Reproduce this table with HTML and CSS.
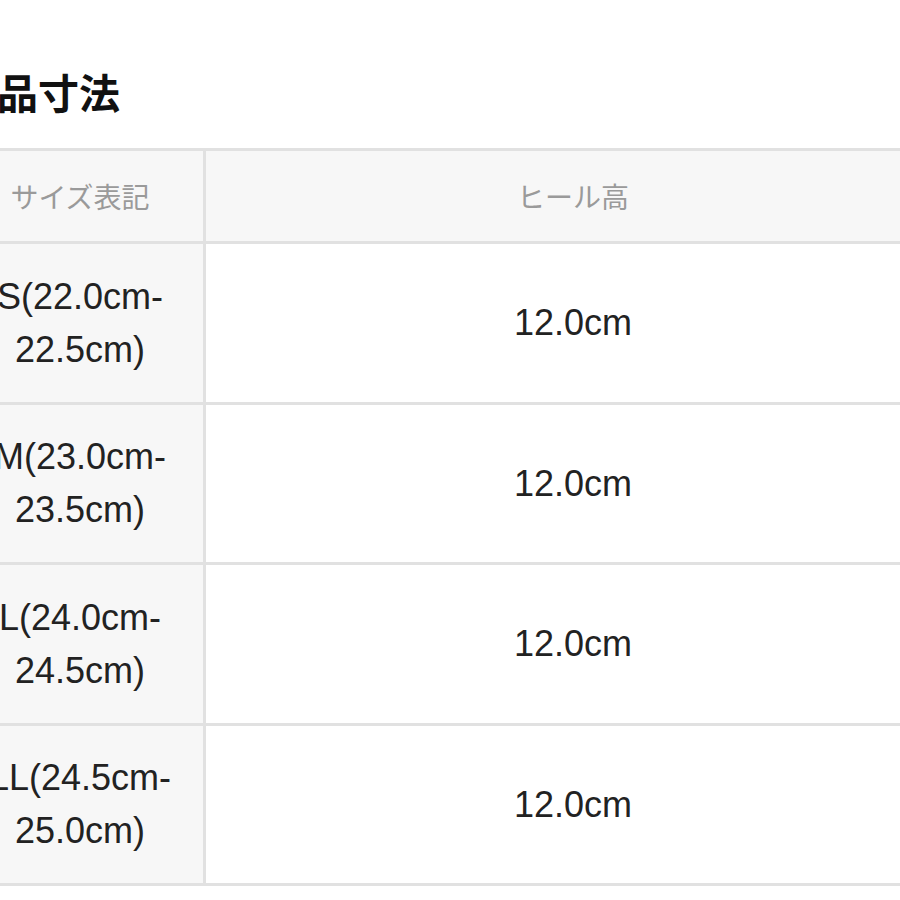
FILE: index.html
```html
<!DOCTYPE html>
<html lang="ja">
<head>
<meta charset="utf-8">
<title>商品寸法</title>
<link rel="stylesheet" href="styles.css">
</head>
<body>
<div class="section">
  <h2 class="title">商品寸法</h2>
  <table class="size-table">
    <thead>
      <tr>
        <th class="col-size">サイズ表記</th>
        <th class="col-heel">ヒール高</th>
      </tr>
    </thead>
    <tbody>
      <tr>
        <td class="cell-size">S(22.0cm-<br>22.5cm)</td>
        <td class="cell-value">12.0cm</td>
      </tr>
      <tr>
        <td class="cell-size">M(23.0cm-<br>23.5cm)</td>
        <td class="cell-value">12.0cm</td>
      </tr>
      <tr>
        <td class="cell-size">L(24.0cm-<br>24.5cm)</td>
        <td class="cell-value">12.0cm</td>
      </tr>
      <tr>
        <td class="cell-size">LL(24.5cm-<br>25.0cm)</td>
        <td class="cell-value">12.0cm</td>
      </tr>
    </tbody>
  </table>
</div>
</body>
</html>
```

FILE: styles.css
```css
html, body {
  margin: 0;
  padding: 0;
  background: #ffffff;
  overflow: hidden;
}

body {
  font-family: "Liberation Sans", "Noto Sans CJK JP", sans-serif;
  color: #222222;
}

.section {
  margin-left: -46px;
  width: 992px;
  padding-top: 71px;
}

.title {
  margin: 0 0 36px 2px;
  font-family: "Noto Sans CJK JP", sans-serif;
  font-size: 41px;
  line-height: 41px;
  font-weight: 700;
  color: #111111;
}

.size-table {
  border-collapse: separate;
  border-spacing: 0;
  table-layout: fixed;
  width: 989px;
  border-top: 3px solid #e1e1e1;
  border-left: 3px solid #e1e1e1;
}

.size-table th,
.size-table td {
  box-sizing: border-box;
  padding: 0;
  border-right: 3px solid #e1e1e1;
  border-bottom: 3px solid #e1e1e1;
  text-align: center;
  vertical-align: middle;
}

.size-table th {
  height: 93px;
  background: #f7f7f7;
  font-family: "Noto Sans CJK JP", sans-serif;
  font-size: 28px;
  font-weight: 400;
  color: #9a9a9a;
  line-height: 40px;
}

.col-size {
  width: 249px;
}

.col-heel {
  width: 737px;
}

.size-table td {
  height: 160.5px;
  font-size: 36px;
  line-height: 53px;
  color: #222222;
}

.cell-size {
  background: #f7f7f7;
}

.cell-value {
  background: #ffffff;
}
```
